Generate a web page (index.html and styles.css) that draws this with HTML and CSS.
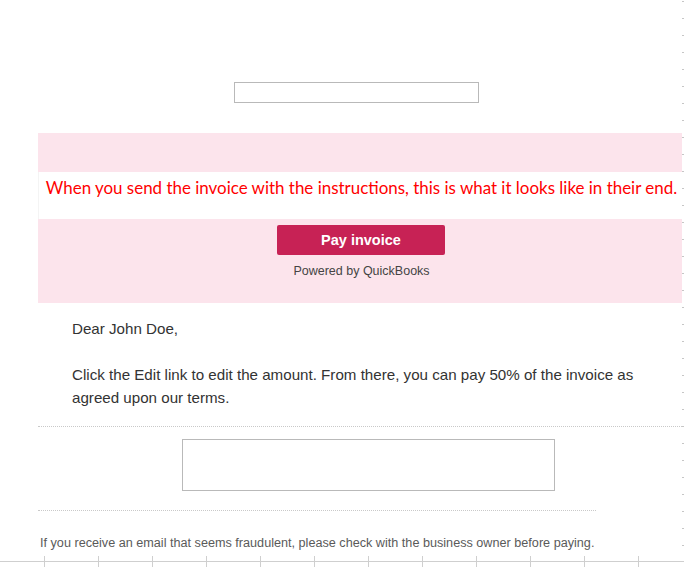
FILE: index.html
```html
<!DOCTYPE html>
<html>
<head>
<meta charset="utf-8">
<link rel="stylesheet" href="styles.css">
</head>
<body>
<div class="page">
  <div class="sheet">
    <div class="logo-box"></div>
    <div class="pink-top"></div>
    <div class="note"><span>When you send the invoice with the instructions, this is what it looks like in their end.</span></div>
    <div class="pay-band">
      <div class="pay-btn">Pay invoice</div>
      <div class="powered">Powered by QuickBooks</div>
    </div>
    <div class="letter">
      <p class="greet">Dear John Doe,</p>
      <p class="body-text">Click the Edit link to edit the amount. From there, you can pay 50% of the invoice as agreed upon our terms.</p>
    </div>
    <div class="rule full"></div>
    <div class="sig-box"></div>
    <div class="rule short"></div>
    <p class="footer">If you receive an email that seems fraudulent, please check with the business owner before paying.</p>
  </div>
  <div class="ticks-right"></div>
  <div class="ruler-bottom"></div>
</div>
</body>
</html>
```
FILE: styles.css
```css
html, body {
  margin: 0;
  padding: 0;
  background: #ffffff;
}
.page {
  position: relative;
  width: 684px;
  height: 567px;
  overflow: hidden;
  font-family: "Liberation Sans", Arial, sans-serif;
}
.sheet {
  padding: 0 2px 0 38px;
  display: flex;
  flex-direction: column;
}
.logo-box {
  margin: 82px 0 0 196px;
  width: 243px;
  height: 19px;
  border: 1px solid #b9b9b9;
}
.pink-top {
  margin-top: 30px;
  height: 39px;
  background: #fce4ec;
}
.note {
  height: 47px;
  display: flex;
  align-items: center;
  justify-content: center;
  border-left: 1px solid #f4f4f4;
}
.note span {
  font-family: Lato, "Open Sans", sans-serif;
  font-size: 16.95px;
  color: #ff0000;
  margin-top: -17px;
  margin-left: 2px;
  white-space: nowrap;
}
.pay-band {
  height: 84px;
  background: #fce4ec;
  display: flex;
  flex-direction: column;
  align-items: center;
}
.pay-btn {
  margin-top: 6px;
  margin-left: 2px;
  width: 168px;
  height: 30px;
  background: #c72255;
  border-radius: 2px;
  color: #ffffff;
  font-weight: bold;
  font-size: 14.5px;
  display: flex;
  align-items: center;
  justify-content: center;
}
.powered {
  margin-top: 8px;
  margin-left: 3px;
  font-size: 12.5px;
  color: #444444;
  line-height: 16px;
}
.letter {
  padding-left: 34px;
  color: #333333;
  font-size: 15.15px;
}
.letter p {
  margin: 0;
}
.greet {
  margin-top: 16px !important;
  line-height: 20px;
}
.body-text {
  margin-top: 24px !important;
  line-height: 23px;
  width: 575px;
}
.rule {
  height: 0;
  border-top: 1px dotted #c9c9c9;
}
.rule.full {
  margin-top: 17px;
}
.sig-box {
  margin: 12px 0 0 144px;
  width: 371px;
  height: 50px;
  border: 1px solid #b9b9b9;
}
.rule.short {
  margin-top: 19px;
  width: 558px;
}
.footer {
  margin: 24px 0 0 2px;
  font-size: 12.65px;
  color: #5a5a5a;
  line-height: 16px;
}
.ticks-right {
  position: absolute;
  top: 1px;
  right: 0;
  width: 2px;
  height: 560px;
  background: repeating-linear-gradient(to bottom, #c6c6c6 0 1px, transparent 1px 17px);
}
.ruler-bottom {
  position: absolute;
  left: 0;
  top: 556px;
  width: 684px;
  height: 11px;
  background:
    linear-gradient(#cfcfcf, #cfcfcf) 0 5px / 100% 1px no-repeat,
    repeating-linear-gradient(to right, transparent 0 44px, #cfcfcf 44px 45px, transparent 45px 54px);
}
```
